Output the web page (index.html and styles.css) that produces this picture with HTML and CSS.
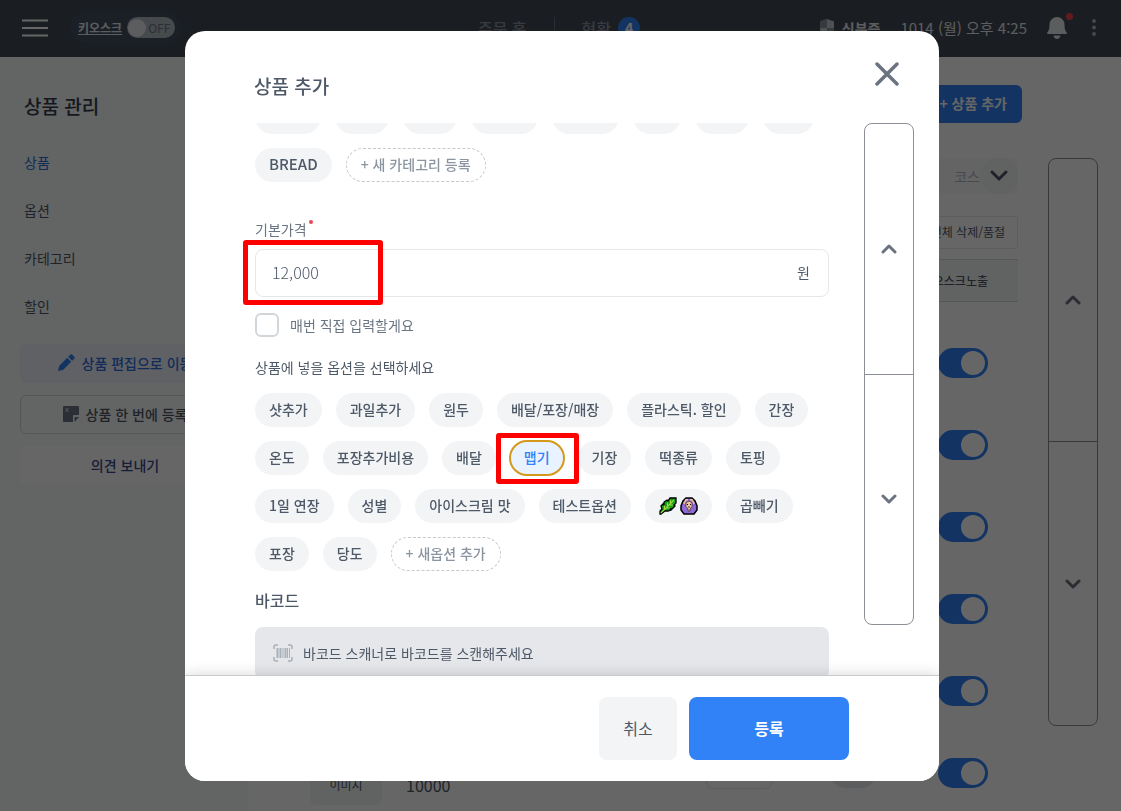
FILE: index.html
```html
<!DOCTYPE html>
<html lang="ko">
<head>
<meta charset="utf-8">
<title>상품 추가</title>
<link rel="stylesheet" href="styles.css">
</head>
<body>
<div class="app">
  <header class="topbar">
    <div class="topbar-side">
      <button class="menu-button" aria-label="메뉴">
        <svg width="26" height="18" viewBox="0 0 26 18"><path d="M0 1.5h26M0 9h26M0 16.5h26" stroke="#fff" stroke-width="2"/></svg>
      </button>
      <label class="kiosk"><span class="kiosk-name">키오스크</span><input type="checkbox" class="sr" aria-label="키오스크"><span class="kiosk-switch"><span class="kiosk-knob"></span>OFF</span></label>
    </div>
    <nav class="topnav">
      <a href="#" class="topnav-link">주문 홈</a>
      <a href="#" class="topnav-link">현황 <span class="count">4</span></a>
    </nav>
    <div class="topbar-side topbar-right">
      <a href="#" class="id-link"><svg width="16" height="18" viewBox="0 0 16 18"><path d="M8 0l7 2.500v7C15 13 12 16 8 18 4 16 1 13 1 9.500v-7z" fill="#c5cad0"/><path d="M8 0v9H1V2.500z" fill="#8b95a1"/><path d="M8 9h7v.5C15 13 12 16 8 18z" fill="#8b95a1"/></svg>신분증</a>
      <span class="date">1014 (월) 오후 4:25</span>
      <button class="bell" aria-label="알림">
        <svg width="20" height="22" viewBox="0 0 20 22"><path d="M10 0a7.500 7.500 0 0 1 7.500 7.500c0 4 .5 6 2.300 8.200.4.6 0 1.300-.7 1.300H.9c-.7 0-1.100-.7-.7-1.300C2 13.500 2.500 11.500 2.500 7.500A7.500 7.500 0 0 1 10 0zM6.500 18.500h7c-.3 2-1.700 3.500-3.500 3.500s-3.200-1.500-3.500-3.500z" fill="#e5e8eb"/></svg>
        <span class="bell-dot"></span>
      </button>
      <button class="more" aria-label="더보기"><svg width="4" height="17" viewBox="0 0 4 17" fill="#b0b8c1"><circle cx="2" cy="2" r="1.900"/><circle cx="2" cy="8.500" r="1.900"/><circle cx="2" cy="15" r="1.900"/></svg></button>
    </div>
  </header>

  <div class="page">
    <aside class="sidebar">
      <h1 class="sidebar-title">상품 관리</h1>
      <nav class="sidenav">
        <a href="#" class="sidenav-link current">상품</a>
        <a href="#" class="sidenav-link">옵션</a>
        <a href="#" class="sidenav-link">카테고리</a>
        <a href="#" class="sidenav-link">할인</a>
      </nav>
      <div class="side-actions">
        <button class="side-button tinted"><svg width="17" height="17" viewBox="0 0 17 17" fill="#3182f6"><path d="M0 17l1.300-5.300L9.200 3.800l4 4-7.900 7.900zM10.200 2.800L12.300.7c.6-.6 1.400-.6 2 0l2 2c.6.6.6 1.400 0 2l-2.100 2.100z"/></svg>상품 편집으로 이동</button>
        <button class="side-button outlined"><svg width="16" height="16" viewBox="0 0 16 16"><path d="M1 0h14a1 1 0 0 1 1 1v8h-5a1 1 0 0 0-1 1v6H1a1 1 0 0 1-1-1V1a1 1 0 0 1 1-1z" fill="#6b7684"/><path d="M16 11l-4.500 5v-4a1 1 0 0 1 1-1z" fill="#6b7684"/><path d="M2.500 2l3 4M5.500 2l-3 4" stroke="#d1d6db"/></svg>상품 한 번에 등록</button>
        <button class="side-button plain">의견 보내기</button>
      </div>
    </aside>

    <main class="main">
      <div class="main-head"><button class="add-button">+ 상품 추가</button></div>
      <div class="main-body">
        <div class="list">
          <button class="course">코스<span class="course-arrow"><svg width="18" height="12" viewBox="0 0 18 12"><path d="M2 2l7 7 7-7" fill="none" stroke="#4e5968" stroke-width="3" stroke-linecap="round"/></svg></span></button>
          <button class="bulk">전체 삭제/품절</button>
          <table class="products">
            <thead><tr><th class="col-image"></th><th></th><th class="col-box"></th><th class="col-kiosk">키오스크노출</th></tr></thead>
            <tbody>
              <tr><td></td><td></td><td></td><td><input type="checkbox" class="switch" checked aria-label="키오스크노출"></td></tr>
              <tr><td></td><td></td><td></td><td><input type="checkbox" class="switch" checked aria-label="키오스크노출"></td></tr>
              <tr><td></td><td></td><td></td><td><input type="checkbox" class="switch" checked aria-label="키오스크노출"></td></tr>
              <tr><td></td><td></td><td></td><td><input type="checkbox" class="switch" checked aria-label="키오스크노출"></td></tr>
              <tr><td></td><td></td><td></td><td><input type="checkbox" class="switch" checked aria-label="키오스크노출"></td></tr>
              <tr><td><div class="thumb">이미지</div></td><td class="price">10000</td><td><div class="stock"></div></td><td><div class="status"><span class="status-pill"></span><input type="checkbox" class="switch" checked aria-label="키오스크노출"></div></td></tr>
            </tbody>
          </table>
        </div>
        <div class="scroller page-scroller">
          <button class="scroller-half" aria-label="위로"><svg width="16" height="10" viewBox="0 0 16 10"><path d="M2 8l6-6 6 6"/></svg></button>
          <button class="scroller-half" aria-label="아래로"><svg width="16" height="10" viewBox="0 0 16 10"><path d="M2 2l6 6 6-6"/></svg></button>
        </div>
      </div>
    </main>
  </div>
</div>

<div class="backdrop">
  <section class="modal" role="dialog" aria-modal="true" aria-labelledby="modal-title">
    <header class="modal-head">
      <h2 class="modal-title" id="modal-title">상품 추가</h2>
      <button class="close" aria-label="닫기"><svg width="24" height="24" viewBox="0 0 24 24"><path d="M2 2l20 20M22 2L2 22" stroke="#6b7280" stroke-width="3.500" stroke-linecap="round"/></svg></button>
    </header>
    <div class="modal-body">
      <form class="form" id="product-form">
        <div class="chips categories">
          <span class="chip w66"></span><span class="chip w54"></span><span class="chip w54"></span><span class="chip w67"></span><span class="chip w67"></span><span class="chip w48"></span><span class="chip w54"></span><span class="chip w51"></span>
          <button type="button" class="chip latin">BREAD</button>
          <button type="button" class="chip dashed">+ 새 카테고리 등록</button>
        </div>
        <label class="label price-label" for="price">기본가격<span class="required"></span></label>
        <div class="price-field">
          <input class="price-input" id="price" type="text" value="12,000"><span class="unit">원</span>
          <span class="mark mark-price"></span>
        </div>
        <label class="check"><input type="checkbox" class="check-box">매번 직접 입력할게요</label>
        <p class="label options-label">상품에 넣을 옵션을 선택하세요</p>
        <div class="chips">
          <button type="button" class="chip">샷추가</button>
          <button type="button" class="chip">과일추가</button>
          <button type="button" class="chip">원두</button>
          <button type="button" class="chip">배달/포장/매장</button>
          <button type="button" class="chip">플라스틱. 할인</button>
          <button type="button" class="chip">간장</button>
          <button type="button" class="chip">온도</button>
          <button type="button" class="chip">포장추가비용</button>
          <button type="button" class="chip">배달</button>
          <div class="marked"><button type="button" class="chip selected">맵기</button><span class="mark mark-option"></span></div>
          <button type="button" class="chip">기장</button>
          <button type="button" class="chip">떡종류</button>
          <button type="button" class="chip">토핑</button>
          <button type="button" class="chip">1일 연장</button>
          <button type="button" class="chip">성별</button>
          <button type="button" class="chip">아이스크림 맛</button>
          <button type="button" class="chip">테스트옵션</button>
          <button type="button" class="chip emoji" aria-label="잎, 사람">
            <svg width="18" height="18" viewBox="0 0 18 18"><path d="M1 17v-3l2-2-1-3 2-2 1 1V5l3-2 1 1 2-3h6v5l-2 2 1 1-3 3-2 0 1 1-3 1-3 0-4 3z" fill="#12a01c" stroke="#000" stroke-width="1.300"/><path d="M1.800 16.200L15 3M5.500 12V8.500M8.500 9V5.500M11.500 6V3M7 11h4M10 8h4" fill="none" stroke="#a9d838" stroke-width="1.100"/></svg>
            <svg width="18" height="18" viewBox="0 0 18 18"><path d="M6 1h6l3 3 2 5v4l-3 4H4l-3-4V9l2-5z" fill="#8d68d8" stroke="#000" stroke-width="1.500"/><path d="M3.800 7L6 2.800h2M14.200 7L12 2.800h-2" fill="none" stroke="#efc3a0" stroke-width="1.500"/><path d="M6 5.500L9 4l3 1.500v4L10 12v2H8v-2L6 9.500z" fill="#efc3a0" stroke="#493631" stroke-width=".8"/><path d="M7 7.500h1M10 7.500h1M8.300 10h1.400" stroke="#000"/></svg>
          </button>
          <button type="button" class="chip">곱빼기</button>
          <button type="button" class="chip">포장</button>
          <button type="button" class="chip">당도</button>
          <button type="button" class="chip dashed">+ 새옵션 추가</button>
        </div>
        <h3 class="barcode-title">바코드</h3>
        <div class="barcode">
          <svg width="20" height="18" viewBox="0 0 20 18" fill="none" stroke="#a9b1bb"><path d="M1 5V3a2 2 0 0 1 2-2h2M15 1h2a2 2 0 0 1 2 2v2M19 13v2a2 2 0 0 1-2 2h-2M5 17H3a2 2 0 0 1-2-2v-2" stroke-width="1.500"/><path d="M4.500 4v10M7.500 4v10M12.500 4v10" stroke-width="2"/><path d="M10 4v10M14.500 4v10M16.500 4v10"/></svg>
          바코드 스캐너로 바코드를 스캔해주세요
        </div>
      </form>
      <div class="scroller modal-scroller">
        <button class="scroller-half" aria-label="위로"><svg width="16" height="10" viewBox="0 0 16 10"><path d="M2 8l6-6 6 6"/></svg></button>
        <button class="scroller-half" aria-label="아래로"><svg width="16" height="10" viewBox="0 0 16 10"><path d="M2 2l6 6 6-6"/></svg></button>
      </div>
    </div>
    <footer class="modal-foot">
      <button class="cancel">취소</button>
      <button class="submit" form="product-form">등록</button>
    </footer>
  </section>
</div>
</body>
</html>
```
FILE: styles.css
```css
* { box-sizing: border-box; }

body {
  margin: 0;
  font-family: "Noto Sans CJK KR", "Noto Sans", sans-serif;
  font-size: 14px;
  line-height: 20px;
  color: #4e5968;
  background: #fff;
}

button, input { font: inherit; color: inherit; }
button { margin: 0; padding: 0; border: 0; background: none; }
a { color: inherit; text-decoration: none; }
h1, h2, h3, p { margin: 0; font-weight: 500; }
svg { display: block; flex: none; }

.sr { position: absolute; opacity: 0; width: 1px; height: 1px; margin: 0; }

.app { height: 100vh; overflow: hidden; display: flex; flex-direction: column; }

/* Top bar */
.topbar {
  flex: none;
  height: 57px;
  padding: 0 25px 2px 22px;
  display: flex;
  align-items: center;
  background: #434b57;
  color: #e5e8eb;
}
.topbar-side { flex: 1; display: flex; align-items: center; gap: 22px; }
.topbar-right { justify-content: flex-end; gap: 20px; }
.kiosk {
  display: flex;
  align-items: center;
  gap: 5px;
  height: 30px;
  padding: 0 6px 0 8px;
  border-radius: 15px;
  background: #455162;
}
.kiosk-name { font-size: 12px; font-weight: 700; text-decoration: underline; }
.kiosk-switch {
  display: flex;
  align-items: center;
  gap: 2px;
  width: 48px;
  height: 21px;
  padding: 1px;
  border-radius: 11px;
  background: #b0b8c1;
  color: #6b7684;
  font-size: 12px;
}
.kiosk-knob { width: 18px; height: 18px; border-radius: 50%; background: #e5e8eb; }
.topnav { display: flex; align-items: center; }
.topnav-link {
  display: flex;
  align-items: center;
  gap: 7px;
  padding: 0 27px 0 0;
  font-size: 16px;
  font-weight: 500;
  color: #8b95a1;
}
.topnav-link + .topnav-link { border-left: 1px solid #6b7684; padding: 0 0 0 27px; }
.count {
  width: 22px;
  height: 22px;
  border-radius: 50%;
  background: #3182f6;
  color: #fff;
  font-size: 14px;
  font-weight: 700;
  line-height: 22px;
  text-align: center;
}
.id-link { display: flex; align-items: center; gap: 7px; font-weight: 700; }
.date { font-size: 15px; white-space: nowrap; }
.bell { position: relative; }
.bell-dot {
  position: absolute;
  top: -4px;
  right: -6px;
  width: 7px;
  height: 7px;
  border-radius: 50%;
  background: #f04452;
}
.more { margin-left: 5px; }

/* Page behind the dialog */
.page { flex: 1; min-height: 0; display: flex; }
.sidebar { flex: none; width: 248px; padding: 35px 18px 0 20px; background: #f8f9fa; }
.sidebar-title { padding-left: 4px; font-size: 19px; line-height: 28px; font-weight: 500; color: #333d4b; }
.sidenav { display: flex; flex-direction: column; gap: 28px; padding: 32px 4px 0; }
.sidenav-link.current { color: #2f6fe0; }
.side-actions { display: flex; flex-direction: column; gap: 12px; padding-top: 28px; }
.side-button {
  display: flex;
  align-items: center;
  justify-content: center;
  gap: 7px;
  height: 39px;
  padding-bottom: 2px;
  border-radius: 6px;
  white-space: nowrap;
  font-weight: 500;
}
.tinted { background: #edf2fb; color: #2f6fe0; }
.outlined { border: 1px solid #d1d6db; }
.plain { background: #fff; color: #3b4890; }

.main { flex: 1; min-width: 0; padding: 28px 23px 0 62px; }
.main-head { display: flex; justify-content: flex-end; padding-right: 76px; }
.add-button {
  height: 38px;
  padding: 0 15px 2px;
  border-radius: 6px;
  background: #3182f6;
  color: #fff;
  font-weight: 700;
}
.main-body { display: flex; align-items: flex-start; gap: 30px; padding-top: 35px; }
.list { flex: 1; min-width: 0; display: flex; flex-direction: column; align-items: flex-end; }
.course {
  display: flex;
  align-items: center;
  height: 36px;
  padding-left: 20px;
  border-radius: 6px;
  background: #f9fafb;
  color: #b0b8c1;
}
.course-arrow {
  display: grid;
  place-items: center;
  width: 38px;
  height: 36px;
  border-radius: 18px;
  background: #f2f4f6;
}
.bulk {
  height: 33px;
  margin-top: 22px;
  padding: 0 12px 2px;
  border: 1px solid #e5e8eb;
  border-radius: 3px;
  font-size: 12px;
}
.products { width: 100%; margin-top: 10px; table-layout: fixed; border-collapse: collapse; }
.products thead tr { height: 42px; background: #f2f4f6; border: 1px solid #d1d6db; border-width: 1px 0; }
.products tbody::before { content: ""; display: block; height: 20px; }
.products tbody tr { height: 82px; }
.products th, .products td { padding: 0; }
.col-image { width: 96px; }
.col-box { width: 124px; }
.products .col-kiosk { width: 188px; padding-right: 30px; text-align: right; font-size: 12px; font-weight: 500; }
.products td:last-child { padding-right: 30px; text-align: right; }
.switch {
  appearance: none;
  width: 50px;
  height: 30px;
  margin: 0;
  padding: 3px;
  border-radius: 15px;
  background: #3182f6;
  vertical-align: middle;
}
.switch::before {
  content: "";
  display: block;
  width: 24px;
  height: 24px;
  margin-left: 20px;
  border-radius: 50%;
  background: #fff;
}
.thumb {
  display: flex;
  align-items: flex-end;
  justify-content: center;
  width: 72px;
  height: 64px;
  padding-bottom: 10px;
  border-radius: 6px;
  background: #f2f4f6;
  font-size: 12px;
}
.products .price { vertical-align: bottom; padding-bottom: 19px; font-size: 16px; }
.stock { width: 66px; height: 32px; border: 1px solid #e5e8eb; border-radius: 6px; }
.status { display: flex; align-items: center; justify-content: space-between; }
.status-pill { width: 46px; height: 30px; border-radius: 15px; background: #e5e8eb; }

/* Up / down paging column */
.scroller {
  flex: none;
  width: 50px;
  display: flex;
  flex-direction: column;
  border: 1px solid #8b9096;
  border-radius: 8px;
}
.scroller-half { flex: 1; display: grid; place-items: center; }
.scroller-half + .scroller-half { border-top: 1px solid #8b9096; }
.scroller path { fill: none; stroke: #6b7280; stroke-width: 3; stroke-linecap: round; stroke-linejoin: round; }
.page-scroller { height: 70vh; }

/* Dialog */
.backdrop {
  position: fixed;
  inset: 0;
  display: flex;
  justify-content: center;
  padding: 31px 24px 30px 27px;
  background: rgba(0, 0, 0, 0.6);
}
.modal {
  width: 100%;
  max-width: 754px;
  display: flex;
  flex-direction: column;
  border-radius: 20px;
  background: #fff;
  overflow: hidden;
}
.modal-head {
  flex: none;
  display: flex;
  justify-content: space-between;
  align-items: flex-start;
  padding: 31px 40px 13px 69px;
}
.modal-title { font-size: 19px; line-height: 48px; color: #4e5968; }
.modal-body {
  flex: 1;
  min-height: 0;
  display: flex;
  gap: 35px;
  padding: 0 25px 0 70px;
  overflow: hidden;
}
.form { flex: 1; min-width: 0; display: flex; flex-direction: column; }
.modal-scroller { margin-bottom: 50px; }

.chips { flex: none; display: flex; flex-wrap: wrap; gap: 14px; }
.categories { margin-top: -23px; }
.chip {
  display: flex;
  align-items: center;
  height: 34px;
  padding: 0 14px 2px;
  border-radius: 17px;
  background: #f2f4f6;
  font-weight: 500;
  white-space: nowrap;
}
.chip.latin { font-size: 15px; }
.chip.dashed { border: 1px dashed #c4c9cf; background: #fff; color: #8b95a1; }
.chip.selected { background: #e8f3ff; color: #3182f6; outline: 2px solid #d4981c; outline-offset: -1px; }
.chip.emoji { gap: 3px; padding: 0 14px; }
.w48 { width: 48px; }
.w51 { width: 51px; }
.w54 { width: 54px; }
.w66 { width: 66px; }
.w67 { width: 67px; }

.label { color: #6b7684; }
.price-label { display: flex; gap: 2px; margin-top: 37px; }
.required { width: 4px; height: 4px; margin-top: 1px; border-radius: 50%; background: #f04452; }
.price-field {
  position: relative;
  flex: none;
  display: flex;
  align-items: center;
  height: 48px;
  margin-top: 10px;
  padding: 0 18px 2px 16px;
  border: 1px solid #e5e8eb;
  border-radius: 8px;
}
.price-input { flex: 1; min-width: 0; padding: 0; border: 0; outline: 0; background: none; font-size: 16px; font-weight: 300; }
.mark { position: absolute; border: 5px solid #f00; border-radius: 3px; pointer-events: none; }
.mark-price { top: -10px; left: -13px; width: 140px; height: 65px; }
.check { display: flex; align-items: center; gap: 11px; margin-top: 16px; color: #6b7684; }
.check-box {
  appearance: none;
  width: 24px;
  height: 24px;
  margin: 0;
  border: 2px solid #d1d6db;
  border-radius: 6px;
}
.options-label { margin: 20px 0 16px; font-weight: 400; color: #4e5968; }
.marked { position: relative; }
.mark-option { inset: -8px -15px -9px -14px; }
.barcode-title { margin: 17px 0 15px; font-size: 16px; line-height: 24px; }
.barcode {
  flex: none;
  display: flex;
  align-items: center;
  gap: 10px;
  height: 52px;
  padding: 0 18px;
  border-radius: 8px;
  background: #e5e7ea;
}

.modal-foot {
  flex: none;
  position: relative;
  display: flex;
  justify-content: flex-end;
  gap: 12px;
  padding: 21px 90px 21px 24px;
  border-top: 1px solid #c8cacc;
  background: #fff;
  box-shadow: 0 0 14px rgba(0, 0, 0, 0.16);
}
.cancel, .submit { height: 63px; padding-bottom: 2px; border-radius: 8px; font-size: 16px; }
.cancel { width: 78px; background: #f2f4f6; }
.submit { width: 160px; background: #3182f6; color: #fff; font-weight: 700; }
```
